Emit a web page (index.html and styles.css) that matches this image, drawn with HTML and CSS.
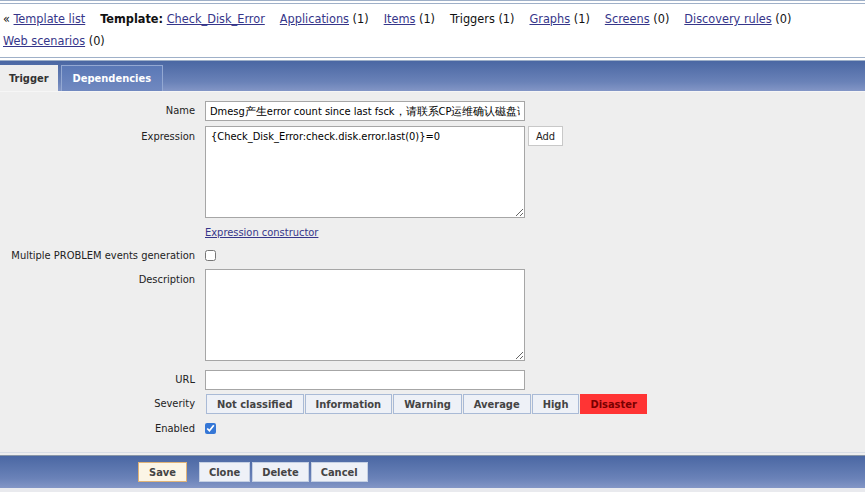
FILE: index.html
```html
<!DOCTYPE html>
<html lang="en">
<head>
    <meta charset="UTF-8">
    <title>Trigger - Check_Disk_Error</title>
    <link rel="stylesheet" href="styles.css">
</head>
<body>
    <div class="header">
        <span class="nav-item">&laquo; <a href="#">Template list</a></span>
        <span class="nav-item"><b>Template:</b> <a href="#">Check_Disk_Error</a></span>
        <span class="nav-item"><a href="#">Applications</a> (1)</span>
        <span class="nav-item"><a href="#">Items</a> (1)</span>
        <span class="nav-item">Triggers (1)</span>
        <span class="nav-item"><a href="#">Graphs</a> (1)</span>
        <span class="nav-item"><a href="#">Screens</a> (0)</span>
        <span class="nav-item"><a href="#">Discovery rules</a> (0)</span>
        <span class="nav-item"><a href="#">Web scenarios</a> (0)</span>
    </div>

    <div class="tabs">
        <div class="tab active">Trigger</div>
        <div class="tab">Dependencies</div>
    </div>

    <div class="form">
        <div class="row">
            <label class="label label-mid">Name</label>
            <input class="text-input" type="text" value="Dmesg产生error count since last fsck，请联系CP运维确认磁盘读写是否正常">
        </div>
        <div class="row">
            <label class="label label-top">Expression</label>
            <textarea class="area">{Check_Disk_Error:check.disk.error.last(0)}=0</textarea>
            <button class="small-button">Add</button>
        </div>
        <div class="row row-link">
            <span class="label"></span>
            <a href="#">Expression constructor</a>
        </div>
        <div class="row row-check row-multiple">
            <label class="label">Multiple PROBLEM events generation</label>
            <input class="check" type="checkbox">
        </div>
        <div class="row row-desc">
            <label class="label label-top">Description</label>
            <textarea class="area"></textarea>
        </div>
        <div class="row row-url">
            <label class="label label-mid">URL</label>
            <input class="text-input" type="text">
        </div>
        <div class="row row-severity">
            <label class="label label-mid">Severity</label>
            <div class="severity">
                <button class="sev">Not classified</button>
                <button class="sev">Information</button>
                <button class="sev">Warning</button>
                <button class="sev">Average</button>
                <button class="sev">High</button>
                <button class="sev sev-disaster">Disaster</button>
            </div>
        </div>
        <div class="row row-check row-enabled">
            <label class="label">Enabled</label>
            <input class="check" type="checkbox" checked>
        </div>
    </div>

    <div class="footer">
        <button class="action save">Save</button>
        <button class="action">Clone</button>
        <button class="action">Delete</button>
        <button class="action">Cancel</button>
    </div>
</body>
</html>
```

FILE: styles.css
```css
body {
    margin: 0;
    background-color: #eeeeee;
    font-family: "DejaVu Sans Condensed", "DejaVu Sans", "Liberation Sans", sans-serif;
    font-stretch: condensed;
    font-size: 11px;
    color: #222;
}

a {
    color: #36368a;
}

.header {
    display: flex;
    flex-wrap: wrap;
    column-gap: 15px;
    background-color: #fff;
    border-top: 4px double #9fb0c8;
    border-bottom: 4px double #9fb0c8;
    padding: 4px 3px 5px;
    font-size: 12.6px;
    line-height: 22px;
    color: #111;
}

.tabs {
    display: flex;
    align-items: flex-end;
    gap: 3px;
    height: 30px;
    background: linear-gradient(to bottom, #4a67a3, #6a82b8 70%, #8396c6);
    border-bottom: 1px solid #f6f6f6;
}

.tab {
    height: 25px;
    line-height: 25px;
    padding: 0 11px;
    font-weight: bold;
    color: #fff;
    background: linear-gradient(to bottom, #5a78b6, #7189c0);
    border: 1px solid #93a8d2;
    border-bottom: none;
}

.tab.active {
    height: 26px;
    line-height: 28px;
    padding: 0 9px;
    background: #eeeeee;
    color: #333;
    border: none;
}

.form {
    padding: 9px 0 12px;
}

.row {
    display: flex;
    align-items: flex-start;
    margin-bottom: 5px;
}

.label {
    width: 195px;
    flex-shrink: 0;
    padding-right: 10px;
    text-align: right;
    color: #222;
}

.label-mid {
    line-height: 20px;
}

.label-top {
    padding-top: 4px;
}

.text-input {
    width: 320px;
    height: 20px;
    box-sizing: border-box;
    margin: 0;
    padding: 0 4px;
    border: 1px solid #a6a6a6;
    background: #fff;
    font: inherit;
    font-size: 11px;
}

.area {
    width: 320px;
    height: 92px;
    box-sizing: border-box;
    margin: 0;
    padding: 3px 5px;
    border: 1px solid #a6a6a6;
    background: #fff;
    font: inherit;
    font-size: 11px;
}

.small-button {
    margin-left: 3px;
    height: 20px;
    width: 35px;
    padding: 0;
    border: 1px solid #c8c8c8;
    background: #fff;
    font: inherit;
    color: #222;
}

.row-link {
    height: 20px;
    line-height: 20px;
    margin-bottom: 2px;
}

.row-check {
    height: 20px;
    align-items: center;
    margin-bottom: 3px;
}

.row-multiple {
    margin-bottom: 4px;
}

.check {
    width: 11px;
    height: 11px;
    margin: 0;
    accent-color: #3577d6;
}

.row-desc {
    margin-bottom: 9px;
}

.row-url {
    margin-bottom: 4px;
}

.row-enabled {
    margin-top: -1px;
}

.severity {
    display: flex;
    margin-left: 1px;
}

.sev {
    height: 20px;
    padding: 0 10px;
    margin-right: 1px;
    border: 1px solid #a9bad6;
    background: #eef1f7;
    font: inherit;
    font-weight: bold;
    color: #444;
}

.sev-disaster {
    padding: 0 9px;
    background: #ff3434;
    border-color: #ff3434;
    color: #7a0000;
}

.footer {
    display: flex;
    align-items: center;
    gap: 2px;
    height: 32px;
    padding-left: 138px;
    margin-top: 2px;
    border-top: 1px solid #8996a6;
    box-shadow: 0 -2px 0 #eeeeee, 0 -3px 0 #d8dde6;
    background: linear-gradient(to bottom, #4a67a3, #6a82b8 70%, #8396c6);
    border-bottom: 6px solid #e9eaee;
}

.action {
    height: 20px;
    padding: 0 9px;
    border: 1px solid #c5d0e3;
    background: #eef1f7;
    font: inherit;
    font-weight: bold;
    color: #444;
}

.action.save {
    padding: 0 10px;
    margin-right: 10px;
    background: #fbf5e6;
    border-color: #e0b377;
}
```
